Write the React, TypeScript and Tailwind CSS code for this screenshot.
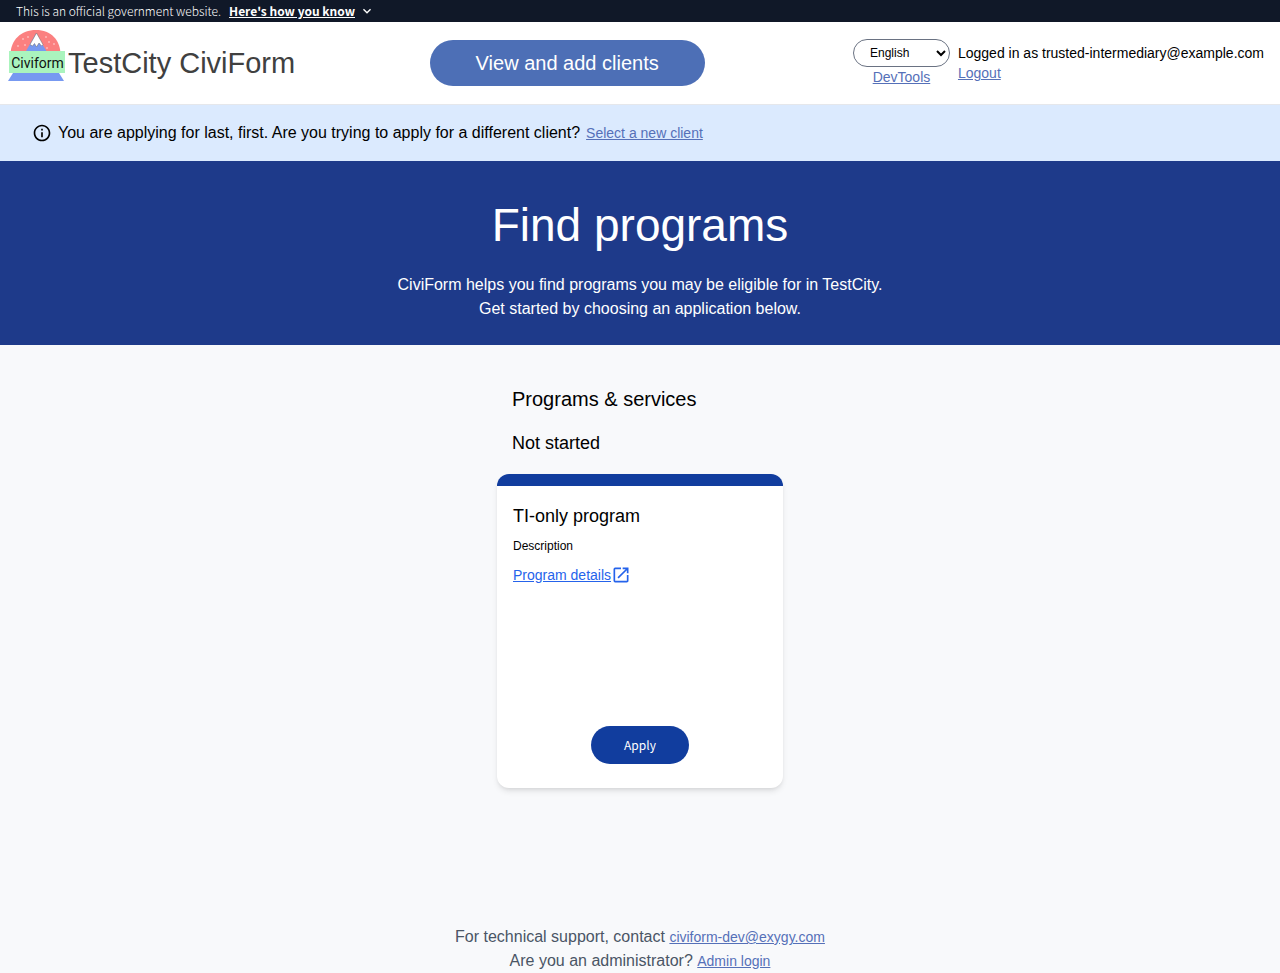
import React from "react";
import { MdInfoOutline, MdOpenInNew, MdExpandMore } from "react-icons/md";

const link = "text-sm text-[#5570b8] underline";

function Logo() {
  return (
    <svg width="58" height="52" viewBox="0 0 58 52" aria-label="Civiform" role="img">
      <path d="M2.500 25C2.500 10 13 0 28 0s24.500 10 24.500 25z" fill="#fb8080" />
      <path d="M17.500 22L28 3.500 39 22z" fill="#7799f1" />
      <path d="M22 14.500L28.500 3l6.500 11.500-1.500 1.500-2.500-3-2.500 4-2-3.500-2 2.500z" fill="#fff" stroke="#666" strokeWidth=".5" />
      <g fill="#fff" opacity=".75">
        <circle cx="15" cy="9" r=".8" /><circle cx="20" cy="7" r=".8" />
        <circle cx="10" cy="16" r=".8" /><circle cx="17" cy="15" r=".8" />
        <circle cx="38" cy="7" r=".8" /><circle cx="41" cy="12" r=".8" />
        <circle cx="46" cy="14" r=".8" /><circle cx="39" cy="18" r=".8" />
      </g>
      <path d="M5 43h46l5 8H0z" fill="#7799f1" />
      <path d="M1 21h56v22H1z" fill="#aaf4bd" />
      <text x="29.500" y="38" textAnchor="middle" fontSize="14" fontFamily="Roboto, sans-serif" fill="#111">Civiform</text>
    </svg>
  );
}

export default function App() {
  return (
    <div className="flex min-h-screen flex-col bg-[#f8f9fb] font-['Liberation_Sans',sans-serif] text-black">
      <div className="flex h-[22px] items-center bg-gray-900 px-4 font-['Noto_Sans_CJK_SC',sans-serif] text-xs text-white">
        <span className="font-light">This is an official government website.</span>
        <button type="button" className="ml-2 flex items-center gap-1 font-bold">
          <span className="underline">Here's how you know</span>
          <MdExpandMore size={16} />
        </button>
      </div>

      <header className="grid grid-cols-3 border-b border-gray-200 bg-white pt-2 pb-[17px]">
        <a href="#" className="flex items-start gap-0.5 pl-2 text-[#404040]">
          <Logo />
          <span className="pt-3 text-[29px] leading-[42px] whitespace-nowrap">TestCity CiviForm</span>
        </a>
        <div className="flex items-start pt-2.5 pl-[3px]">
          <a href="#" className="flex h-[46px] w-[275px] items-center justify-center rounded-full bg-[#4d6fb6] text-xl text-white">
            View and add clients
          </a>
        </div>
        <div className="flex items-start justify-end gap-2 pt-[9px] pr-4">
          <div className="flex flex-col items-center">
            <select aria-label="Language" className="h-7 w-[97px] rounded-full border border-gray-500 bg-white px-3 text-xs">
              <option>English</option>
            </select>
            <a href="#" className={link}>DevTools</a>
          </div>
          <div className="flex flex-col pt-1 text-sm whitespace-nowrap">
            <span>Logged in as trusted-intermediary@example.com</span>
            <a href="#" className={link}>Logout</a>
          </div>
        </div>
      </header>

      <div className="flex h-14 items-center gap-1.5 bg-blue-100 px-8">
        <MdInfoOutline size={20} />
        <span>You are applying for last, first. Are you trying to apply for a different client?</span>
        <a href="#" className={link}>Select a new client</a>
      </div>

      <section className="bg-[#1e3a8a] px-4 pt-10 pb-6 text-center text-white">
        <h1 className="text-[46px] leading-[48px]">Find programs</h1>
        <p className="pt-6">CiviForm helps you find programs you may be eligible for in TestCity.</p>
        <p>Get started by choosing an application below.</p>
      </section>

      <main className="mx-auto w-72 pt-10">
        <h2 className="px-4 text-xl">Programs &amp; services</h2>
        <h3 className="mt-4 px-4 text-lg">Not started</h3>
        <article className="mx-px mt-[17px] flex h-[314px] flex-col rounded-xl border-t-12 border-[#113d9e] bg-white px-4 pt-4 pb-6 shadow-md">
          <h4 className="text-lg">TI-only program</h4>
          <p className="mt-2 text-xs">Description</p>
          <a href="#" className="mt-[11px] flex items-center text-sm text-[#2563eb]">
            <span className="underline">Program details</span>
            <MdOpenInNew size={20} />
          </a>
          <button type="button" className="mt-auto h-[38px] w-[98px] self-center rounded-full bg-[#113d9e] font-['Noto_Sans_CJK_SC',sans-serif] text-xs text-white">
            Apply
          </button>
        </article>
      </main>

      <footer className="mt-auto text-center text-gray-600">
        <p>For technical support, contact <a href="#" className={link}>civiform-dev@exygy.com</a></p>
        <p>Are you an administrator? <a href="#" className={link}>Admin login</a></p>
      </footer>
    </div>
  );
}
